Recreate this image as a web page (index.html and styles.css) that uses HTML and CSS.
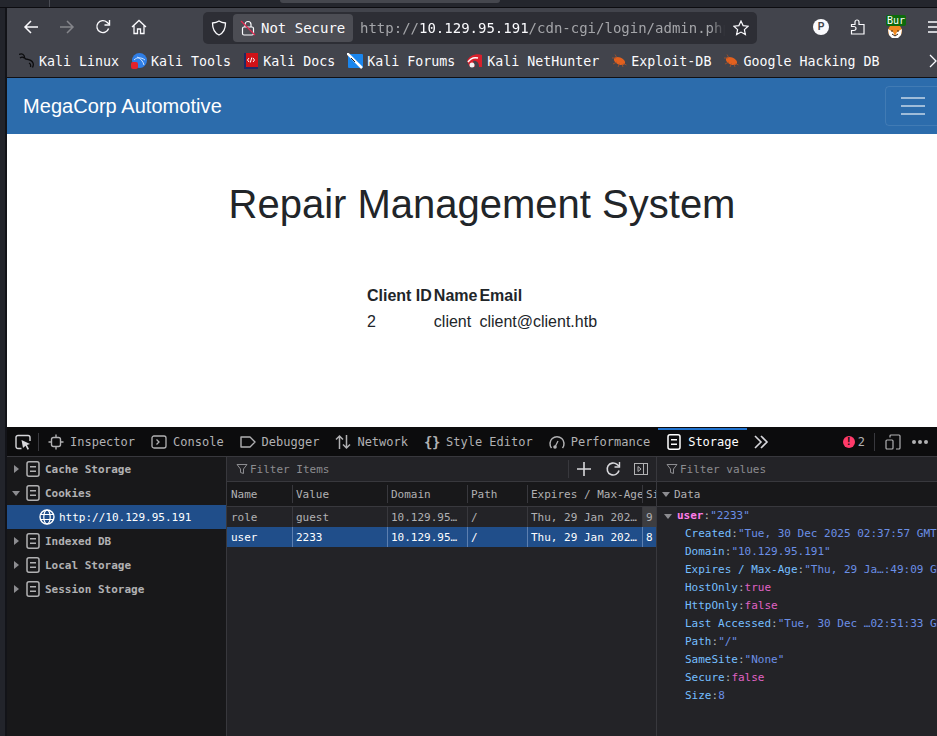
FILE: index.html
```html
<!DOCTYPE html>
<html lang="en">
<head>
    <meta charset="UTF-8">
    <meta name="viewport" content="width=device-width, initial-scale=1.0">
    <title>Repair Management System</title>
    <link rel="stylesheet" href="styles.css">
</head>
<body>

    <svg class="defs" width="0" height="0">
        <symbol id="db" viewBox="0 0 16 16">
            <rect x="2" y=".8" width="12" height="14.400" rx="2" fill="none" stroke="currentColor" stroke-width="1.500"/>
            <path d="M5 5.800h6M5 10.200h6" stroke="currentColor" stroke-width="1.400"/>
        </symbol>
        <symbol id="funnel" viewBox="0 0 12 12">
            <path d="M1 1.500h10L7.500 6v4.500l-3-1V6z" fill="none" stroke="currentColor" stroke-width="1"/>
        </symbol>
        <symbol id="roach" viewBox="0 0 16 16">
            <ellipse cx="8.500" cy="8" rx="6" ry="3.500" transform="rotate(25 8.500 8)" fill="#e2601e"/>
            <path d="M1 5h4M4 1.500 6 5M2 11l4-2M7 14l1.500-3.500M12 14l-1-3M15.500 12l-3-1.500" stroke="#a8532c" stroke-width=".8"/>
        </symbol>
    </svg>

    <div class="top-strip"><span class="strip-line"></span><span class="strip-tab"></span></div>

    <div class="desktop">
        <div class="side-strip"></div>

        <div class="window">
            <!-- Browser toolbar -->
            <div class="nav-bar">
                <button class="tool-btn">
                    <svg width="16" height="16" viewBox="0 0 16 16"><path d="M15 8H2M8 2 2 8l6 6" fill="none" stroke="#fbfbfe" stroke-width="1.500"/></svg>
                </button>
                <button class="tool-btn">
                    <svg width="16" height="16" viewBox="0 0 16 16"><path d="M1 8h13M8 2l6 6-6 6" fill="none" stroke="#85868b" stroke-width="1.500"/></svg>
                </button>
                <button class="tool-btn">
                    <svg width="16" height="16" viewBox="0 0 16 16"><path d="M13.600 9.500A6 6 0 1 1 12 3.200L14 5" fill="none" stroke="#fbfbfe" stroke-width="1.400"/><path d="M14.500 1v5h-5" fill="none" stroke="#fbfbfe" stroke-width="1.400"/></svg>
                </button>
                <button class="tool-btn">
                    <svg width="16" height="16" viewBox="0 0 16 16"><path d="M1 8l7-6.500L15 8M3 6.500v8h3.500V10h3v4.500h3.500v-8" fill="none" stroke="#fbfbfe" stroke-width="1.300"/></svg>
                </button>

                <div class="url-bar">
                    <svg class="shield" width="16" height="16" viewBox="0 0 16 16"><path d="M8 1c2 1.300 4 1.800 6.500 2 0 6-2 10-6.500 12C3.500 13 1.500 9 1.500 3 4 2.800 6 2.300 8 1z" fill="none" stroke="#fbfbfe" stroke-width="1.300"/></svg>
                    <div class="not-secure">
                        <svg width="16" height="16" viewBox="0 0 16 16"><rect x="2.500" y="7" width="11" height="8" rx="1.500" fill="none" stroke="#fbfbfe" stroke-width="1.200"/><path d="M5 7V4.500a3 3 0 0 1 6 0V7" fill="none" stroke="#fbfbfe" stroke-width="1.200"/><path d="M1 1l14 14" stroke="#e22850" stroke-width="1.300"/></svg>
                        <span>Not Secure</span>
                    </div>
                    <div class="url-text">http://<b>10.129.95.191</b>/cdn-cgi/login/admin.php</div>
                    <svg class="star" width="16" height="16" viewBox="0 0 16 16"><path d="M8 1l2.100 4.600 5 .6-3.700 3.400 1 5L8 12.100 3.600 14.600l1-5L.9 6.200l5-.6z" fill="none" stroke="#fbfbfe" stroke-width="1.200"/></svg>
                </div>

                <button class="tool-btn pocket-btn"><span class="pocket">P</span></button>
                <button class="tool-btn">
                    <svg width="16" height="16" viewBox="0 0 16 16"><path d="M2.500 5.500H6V3a2 2 0 0 1 4 0v2.500h5V15H2.500v-3.500H5a2 2 0 0 0 0-4H2.500z" fill="none" stroke="#fbfbfe" stroke-width="1.200"/></svg>
                </button>
                <button class="tool-btn burp-btn">
                    <svg width="16" height="16" viewBox="0 0 16 16"><circle cx="8" cy="8" r="7" fill="#ef8a22"/><path d="M1 6l5 3 2 4 2-4 5-3-1 6-3 3H5l-3-3z" fill="#fff"/><path d="M5 11l3 2 3-2M4 8h2M10 8h2" stroke="#3a2410" fill="none"/></svg>
                    <span class="burp-badge">Bur</span>
                </button>
                <button class="tool-btn menu-btn">
                    <svg width="16" height="16" viewBox="0 0 16 16"><path d="M1 3h14M1 8h14M1 13h14" stroke="#fbfbfe" stroke-width="1.400"/></svg>
                </button>
            </div>

            <!-- Bookmarks -->
            <div class="bookmarks">
                <div class="bookmark">
                    <svg width="16" height="16" viewBox="0 0 16 16"><path d="M0 1.500c2-1 4-.5 5 1 .8 1.500 0 3 2 3.500 3 .5 6 1.500 7 4 .6 1.500.3 3-.5 4.500M1 5c1.500-1 3-1 4 0M10 10c1 .5 2 2 1.500 4" fill="none" stroke="#0b0b0d" stroke-width="1.300"/></svg>
                    <span>Kali Linux</span>
                </div>
                <div class="bookmark">
                    <svg width="16" height="16" viewBox="0 0 16 16"><circle cx="8.500" cy="7.500" r="7.500" fill="#2f7ee6"/><path d="M3 7c3-3 7-3 11 0M6 4c3 1 6 4 7 8" stroke="#cfe4ff" fill="none"/><rect x="0" y="9" width="7" height="7" rx="2" fill="#e5232b"/></svg>
                    <span>Kali Tools</span>
                </div>
                <div class="bookmark">
                    <svg width="16" height="16" viewBox="0 0 16 16"><rect x="1" y="0" width="14" height="16" fill="#1e2a66"/><rect x="3" y="0" width="12" height="14" fill="#d01218"/><path d="M6 5 4.500 7 6 9M10 5l1.500 2L10 9M8.800 4.500l-1.500 5" stroke="#fff" fill="none"/></svg>
                    <span>Kali Docs</span>
                </div>
                <div class="bookmark">
                    <svg width="16" height="16" viewBox="0 0 16 16"><rect x="1" y="1" width="15" height="14" rx="1" fill="#1a86ee"/><path d="M0 0l15 15" stroke="#fff" stroke-width="2.500"/><path d="M4 5l4 4" stroke="#222" stroke-width="1"/></svg>
                    <span>Kali Forums</span>
                </div>
                <div class="bookmark">
                    <svg width="16" height="16" viewBox="0 0 16 16"><path d="M0 8C2 3 9 0 15 2v12h-3C12 9 9 7 6 8l2 6H3z" fill="#d8202c"/><path d="M1 9c2-3 6-5 10-4" stroke="#fff" stroke-width="1.500" fill="none"/><circle cx="5" cy="12" r="2.500" fill="#f2f2f2"/></svg>
                    <span>Kali NetHunter</span>
                </div>
                <div class="bookmark">
                    <svg width="16" height="16"><use href="#roach"/></svg>
                    <span>Exploit-DB</span>
                </div>
                <div class="bookmark">
                    <svg width="16" height="16"><use href="#roach"/></svg>
                    <span>Google Hacking DB</span>
                </div>
                <svg class="more-marks" width="12" height="14" viewBox="0 0 12 14"><path d="M1 1l6 6-6 6" fill="none" stroke="#fbfbfe" stroke-width="1.300"/></svg>
            </div>

            <!-- The page itself -->
            <div class="page">
                <nav class="navbar">
                    <a class="brand">MegaCorp Automotive</a>
                    <button class="toggler"><span></span><span></span><span></span></button>
                </nav>
                <h1>Repair Management System</h1>
                <table class="clients">
                    <tr><th>Client ID</th><th>Name</th><th>Email</th></tr>
                    <tr><td>2</td><td>client</td><td>client@client.htb</td></tr>
                </table>
            </div>

            <!-- Devtools -->
            <div class="devtools">
                <div class="dev-tabs">
                    <div class="pick">
                        <svg width="16" height="16" viewBox="0 0 16 16"><path d="M6.500 14.500H3a2 2 0 0 1-2-2v-9a2 2 0 0 1 2-2h10a2 2 0 0 1 2 2v3.500" fill="none" stroke="#d7d7db" stroke-width="1.400"/><path d="M6.500 6l8.500 4-3 1 2 4-1.500.7-2-4-2.500 2.300z" fill="#d7d7db"/></svg>
                    </div>
                    <div class="dev-tab">
                        <svg width="16" height="16" viewBox="0 0 16 16"><rect x="3.500" y="3.500" width="9" height="9" rx="2" fill="none" stroke="#b1b1b3" stroke-width="1.400"/><path d="M8 .5v3M8 12.500v3M.5 8h3M12.500 8h3" stroke="#b1b1b3" stroke-width="1.400"/></svg>
                        Inspector
                    </div>
                    <div class="dev-tab">
                        <svg width="16" height="16" viewBox="0 0 16 16"><rect x="1" y="2" width="14" height="12" rx="2" fill="none" stroke="#b1b1b3" stroke-width="1.300"/><path d="M5.500 5.500 8 8l-2.500 2.500" fill="none" stroke="#b1b1b3" stroke-width="1.300"/></svg>
                        Console
                    </div>
                    <div class="dev-tab">
                        <svg width="16" height="16" viewBox="0 0 16 16"><path d="M1 3h9l5 5-5 5H1z" fill="none" stroke="#b1b1b3" stroke-width="1.400" stroke-linejoin="round"/></svg>
                        Debugger
                    </div>
                    <div class="dev-tab">
                        <svg width="16" height="16" viewBox="0 0 16 16"><path d="M4.500 15V2M1 5.500 4.500 2 8 5.500M11.500 1v13M8 10.500l3.500 3.500 3.500-3.500" fill="none" stroke="#b1b1b3" stroke-width="1.500"/></svg>
                        Network
                    </div>
                    <div class="dev-tab">
                        <span class="braces">{}</span>
                        Style Editor
                    </div>
                    <div class="dev-tab">
                        <svg width="16" height="16" viewBox="0 0 16 16"><path d="M2.500 14A7 7 0 1 1 13.500 14" fill="none" stroke="#b1b1b3" stroke-width="1.500"/><path d="M6 13 9 7" stroke="#b1b1b3" stroke-width="1.300"/><circle cx="6" cy="13" r="1.800" fill="#b1b1b3"/></svg>
                        Performance
                    </div>
                    <div class="dev-tab active">
                        <svg width="16" height="16"><use href="#db"/></svg>
                        Storage
                    </div>
                    <svg class="more-tabs" width="16" height="14" viewBox="0 0 16 14"><path d="M2 1l6 6-6 6M8 1l6 6-6 6" fill="none" stroke="#d7d7db" stroke-width="1.600"/></svg>

                    <div class="dev-right">
                        <span class="err-dot">!</span>
                        <span class="err-count">2</span>
                        <span class="dev-sep"></span>
                        <svg width="16" height="16" viewBox="0 0 16 16"><path d="M5 3.500V2a1 1 0 0 1 1-1h8a1 1 0 0 1 1 1v12a1 1 0 0 1-1 1h-3" fill="none" stroke="#b1b1b3" stroke-width="1.200"/><rect x="1" y="6" width="7" height="9" rx="1" fill="none" stroke="#b1b1b3" stroke-width="1.200"/></svg>
                        <span class="dots"><i></i><i></i><i></i></span>
                    </div>
                </div>

                <div class="dev-body">
                    <div class="store-tree">
                        <div class="store-item"><span class="tri closed"></span><svg width="16" height="16"><use href="#db"/></svg>Cache Storage</div>
                        <div class="store-item"><span class="tri open"></span><svg width="16" height="16"><use href="#db"/></svg>Cookies</div>
                        <div class="store-item host">
                            <svg width="16" height="16" viewBox="0 0 16 16"><circle cx="8" cy="8" r="7" fill="none" stroke="#fff" stroke-width="1.400"/><ellipse cx="8" cy="8" rx="3.200" ry="7" fill="none" stroke="#fff" stroke-width="1.200"/><path d="M1.500 5.500h13M1.500 10.500h13" stroke="#fff" stroke-width="1.200"/></svg>
                            http://10.129.95.191
                        </div>
                        <div class="store-item"><span class="tri closed"></span><svg width="16" height="16"><use href="#db"/></svg>Indexed DB</div>
                        <div class="store-item"><span class="tri closed"></span><svg width="16" height="16"><use href="#db"/></svg>Local Storage</div>
                        <div class="store-item"><span class="tri closed"></span><svg width="16" height="16"><use href="#db"/></svg>Session Storage</div>
                    </div>

                    <div class="cookie-pane">
                        <div class="filter-row">
                            <svg width="12" height="12"><use href="#funnel"/></svg>
                            <span>Filter Items</span>
                            <div class="filter-tools">
                                <span class="dev-sep"></span>
                                <svg width="16" height="16" viewBox="0 0 16 16"><path d="M8 1v14M1 8h14" stroke="#d7d7db" stroke-width="1.600"/></svg>
                                <svg width="16" height="16" viewBox="0 0 16 16"><path d="M14 9.500A6 6 0 1 1 12 3.400L14 5" fill="none" stroke="#d7d7db" stroke-width="1.600"/><path d="M14.500 1v5h-5" fill="none" stroke="#d7d7db" stroke-width="1.400"/></svg>
                                <svg width="14" height="12" viewBox="0 0 14 12"><rect x=".5" y=".5" width="13" height="11" fill="none" stroke="#b1b1b3"/><path d="M9.500 .5v11" stroke="#b1b1b3"/><path d="M4 3.500 7 6 4 8.500z" fill="none" stroke="#b1b1b3"/></svg>
                            </div>
                        </div>
                        <div class="cookie-head">
                            <div>Name</div><div>Value</div><div>Domain</div><div>Path</div><div>Expires / Max-Age</div><div>Size</div>
                        </div>
                        <div class="cookie-row">
                            <div>role</div><div>guest</div><div>10.129.95…</div><div>/</div><div>Thu, 29 Jan 202…</div><div class="hover-cell">9</div>
                        </div>
                        <div class="cookie-row selected">
                            <div>user</div><div>2233</div><div>10.129.95…</div><div>/</div><div>Thu, 29 Jan 202…</div><div>8</div>
                        </div>
                    </div>

                    <div class="data-pane">
                        <div class="filter-row">
                            <svg width="12" height="12"><use href="#funnel"/></svg>
                            <span>Filter values</span>
                        </div>
                        <div class="data-head"><span class="tri open"></span>Data</div>
                        <div class="data-tree">
                            <div class="data-top"><span class="tri open"></span><b class="bool">user</b><i>:</i><span class="str">"2233"</span></div>
                            <div class="data-row"><em>Created</em><i>:</i><span class="str">"Tue, 30 Dec 2025 02:37:57 GMT"</span></div>
                            <div class="data-row"><em>Domain</em><i>:</i><span class="str">"10.129.95.191"</span></div>
                            <div class="data-row"><em>Expires / Max-Age</em><i>:</i><span class="str">"Thu, 29 Ja…:49:09 GMT"</span></div>
                            <div class="data-row"><em>HostOnly</em><i>:</i><span class="bool">true</span></div>
                            <div class="data-row"><em>HttpOnly</em><i>:</i><span class="bool">false</span></div>
                            <div class="data-row"><em>Last Accessed</em><i>:</i><span class="str">"Tue, 30 Dec …02:51:33 GMT"</span></div>
                            <div class="data-row"><em>Path</em><i>:</i><span class="str">"/"</span></div>
                            <div class="data-row"><em>SameSite</em><i>:</i><span class="str">"None"</span></div>
                            <div class="data-row"><em>Secure</em><i>:</i><span class="bool">false</span></div>
                            <div class="data-row"><em>Size</em><i>:</i><span class="str">8</span></div>
                        </div>
                    </div>
                </div>
            </div>
        </div>
    </div>

</body>
</html>
```

FILE: styles.css
```css
* {
    box-sizing: border-box;
}
html, body {
    margin: 0;
    height: 736px;
    overflow: hidden;
}
body {
    width: 937px;
    background-color: #1b1d23;
    font-family: "DejaVu Sans Mono", monospace;
    display: flex;
    flex-direction: column;
}
button {
    background: none;
    border: none;
    padding: 0;
    font: inherit;
    color: inherit;
}
.defs {
    display: block;
    height: 0;
}

/* Strip of the desktop behind the window */
.top-strip {
    height: 8px;
    background-color: #24262d;
    border-bottom: 1px solid #0c0c10;
    display: flex;
    flex-shrink: 0;
}
.strip-line {
    width: 1px;
    height: 7px;
    margin-left: 49px;
    background-color: #4a4c54;
}
.strip-tab {
    width: 220px;
    height: 3px;
    margin-left: 230px;
    background-color: #45474e;
    border-radius: 0 0 4px 4px;
}
.desktop {
    flex: 1;
    display: flex;
    min-height: 0;
}
.side-strip {
    width: 7px;
    flex-shrink: 0;
    background-color: #22242b;
    border-right: 2px solid #121318;
}
.window {
    width: 930px;
    overflow: hidden;
    display: flex;
    flex-direction: column;
}

/* Browser toolbar */
.nav-bar {
    height: 37px;
    padding-left: 6px;
    background-color: #42444c;
    display: flex;
    align-items: center;
    flex-shrink: 0;
}
.tool-btn {
    width: 36px;
    height: 32px;
    flex-shrink: 0;
    display: flex;
    align-items: center;
    justify-content: center;
    position: relative;
}
.url-bar {
    width: 554px;
    height: 32px;
    margin-left: 46px;
    margin-top: 3px;
    padding: 0 8px;
    flex-shrink: 0;
    background-color: #2d2e35;
    border-radius: 5px;
    display: flex;
    align-items: center;
    color: #a4a5a9;
    font-size: 14px;
}
.shield {
    flex-shrink: 0;
}
.not-secure {
    width: 120px;
    height: 28px;
    margin-left: 6px;
    padding-left: 7px;
    flex-shrink: 0;
    background-color: #4c4d54;
    border-radius: 4px;
    color: #fbfbfe;
    display: flex;
    align-items: center;
    gap: 5px;
}
.url-text {
    flex: 1;
    margin-left: 7px;
    white-space: nowrap;
    overflow: hidden;
    -webkit-mask-image: linear-gradient(to left, transparent 0, #000 14px);
    mask-image: linear-gradient(to left, transparent 0, #000 14px);
}
.url-text b {
    font-weight: normal;
    color: #fbfbfe;
}
.star {
    margin-left: 8px;
    flex-shrink: 0;
}
.pocket-btn {
    margin-left: 46px;
}
.pocket {
    width: 16px;
    height: 16px;
    background-color: #fbfbfe;
    border-radius: 50%;
    color: #42444c;
    font: bold 10px/16px "Liberation Sans", sans-serif;
    text-align: center;
}
.burp-btn {
    margin-left: 3px;
}
.burp-btn svg {
    margin-top: 9px;
    margin-left: -2px;
}
.burp-badge {
    position: absolute;
    top: 4px;
    left: 8px;
    width: 20px;
    height: 11px;
    background-color: #0d6a0d;
    border-radius: 2px;
    color: #fff;
    font-size: 10px;
    line-height: 11px;
    text-align: center;
}
.menu-btn {
    margin-left: 3px;
}

/* Bookmarks */
.bookmarks {
    height: 33px;
    padding-left: 12px;
    background-color: #42444c;
    border-bottom: 1px solid #101014;
    color: #fbfbfe;
    font-size: 13.31px;
    display: flex;
    align-items: center;
    gap: 12px;
    flex-shrink: 0;
}
.bookmark {
    display: flex;
    align-items: center;
    gap: 4px;
    white-space: nowrap;
}
.more-marks {
    margin-left: 38px;
    flex-shrink: 0;
}

/* The page */
.page {
    width: 950px;
    height: 349px;
    flex-shrink: 0;
    background-color: #fff;
    color: #212529;
    font-family: "Liberation Sans", Arial, sans-serif;
    font-size: 16px;
    line-height: 1.5;
}
.navbar {
    height: 56px;
    padding: 0 16px;
    background-color: #2c6cac;
    display: flex;
    align-items: center;
    justify-content: space-between;
}
.brand {
    color: #fff;
    font-size: 20px;
    letter-spacing: 0.05px;
}
.toggler {
    width: 56px;
    height: 40px;
    border: 1px solid rgba(255, 255, 255, 0.1);
    border-radius: 4px;
    padding: 0 15px;
    display: flex;
    flex-direction: column;
    justify-content: center;
    gap: 6px;
}
.toggler span {
    height: 2px;
    background-color: rgba(255, 255, 255, 0.55);
}
h1 {
    margin: 46px 0 55px;
    font-size: 40px;
    font-weight: 500;
    line-height: 48px;
    text-align: center;
}
.clients {
    margin: 0 auto;
    border-collapse: collapse;
    text-align: left;
}
.clients th, .clients td {
    padding: 1px;
}

/* Devtools */
.devtools {
    flex: 1;
    min-height: 0;
    background-color: #232327;
    display: flex;
    flex-direction: column;
    font-size: 11px;
}
.dev-tabs {
    height: 30px;
    background-color: #0c0c0d;
    border-top: 1px solid #0c0c0d;
    border-bottom: 1px solid #38383d;
    color: #b1b1b3;
    font-size: 12px;
    display: flex;
    align-items: stretch;
    flex-shrink: 0;
}
.pick {
    width: 33px;
    padding-left: 8px;
    display: flex;
    align-items: center;
    position: relative;
}
.pick::after {
    content: "";
    position: absolute;
    right: 1px;
    top: 5px;
    bottom: 5px;
    width: 1px;
    background-color: #38383d;
}
.dev-tab {
    padding: 0 8px;
    display: flex;
    align-items: center;
    gap: 6px;
    white-space: nowrap;
}
.dev-tab.active {
    color: #fff;
    box-shadow: inset 0 2px 0 #1f72cf;
}
.braces {
    width: 16px;
    font-size: 14px;
    font-weight: bold;
    letter-spacing: -0.4px;
    color: #b1b1b3;
}
.more-tabs {
    margin-left: 6px;
    align-self: center;
}
.dev-right {
    margin-left: auto;
    padding-right: 9px;
    display: flex;
    align-items: center;
}
.err-dot {
    width: 12px;
    height: 12px;
    margin-right: 3px;
    background-color: #ff3b6b;
    border-radius: 50%;
    color: #0c0c0d;
    font: bold 10px/12px "Liberation Sans", sans-serif;
    text-align: center;
}
.dev-sep {
    width: 1px;
    height: 18px;
    background-color: #38383d;
}
.dev-right .dev-sep {
    margin: 0 10px 0 9px;
}
.dots {
    margin-left: 11px;
    display: flex;
    gap: 2px;
}
.dots i {
    width: 4px;
    height: 4px;
    background-color: #b1b1b3;
    border-radius: 50%;
}
.dev-body {
    flex: 1;
    min-height: 0;
    display: flex;
}
.tri {
    width: 0;
    height: 0;
    flex-shrink: 0;
    display: inline-block;
}
.tri.closed {
    border-left: 5px solid #8c8c90;
    border-top: 4.5px solid transparent;
    border-bottom: 4.5px solid transparent;
}
.tri.open {
    border-top: 5px solid #8c8c90;
    border-left: 4.5px solid transparent;
    border-right: 4.5px solid transparent;
}

/* Storage tree on the left */
.store-tree {
    width: 220px;
    flex-shrink: 0;
    background-color: #18181a;
    border-right: 1px solid #38383d;
    color: #b1b1b3;
    font-weight: bold;
}
.store-item {
    height: 24px;
    padding-left: 18px;
    position: relative;
    display: flex;
    align-items: center;
    gap: 4px;
}
.store-item svg {
    flex-shrink: 0;
}
.store-item .tri {
    position: absolute;
    left: 7px;
}
.store-item .tri.open {
    left: 5px;
}
.store-item.host {
    padding-left: 32px;
    background-color: #204e8a;
    color: #fff;
    font-weight: normal;
}

/* Cookie table */
.cookie-pane {
    width: 430px;
    flex-shrink: 0;
    border-right: 1px solid #38383d;
}
.filter-row {
    height: 25px;
    padding-left: 9px;
    border-bottom: 1px solid #38383d;
    color: #8c8c90;
    display: flex;
    align-items: center;
    gap: 2px;
}
.filter-tools {
    margin-left: auto;
    padding-right: 8px;
    display: flex;
    align-items: center;
    gap: 13px;
}
.filter-tools .dev-sep {
    margin-right: -6px;
}
.cookie-head, .cookie-row {
    display: grid;
    grid-template-columns: 65px 95px 80px 60px 115px 14px;
    white-space: nowrap;
}
.cookie-head > div, .cookie-row > div {
    padding-left: 4px;
    overflow: hidden;
}
.cookie-head {
    height: 25px;
    background-color: #18181a;
    border-bottom: 1px solid #38383d;
    color: #b1b1b3;
    line-height: 25px;
}
.cookie-head > div + div {
    background: linear-gradient(#38383d, #38383d) left 3px / 1px 18px no-repeat;
}
.cookie-row {
    height: 20px;
    line-height: 21px;
    color: #b1b1b3;
}
.cookie-row > div + div {
    border-left: 1px solid #38383d;
    padding-left: 3px;
}
.hover-cell {
    background-color: #3d3d40;
}
.cookie-row.selected {
    background-color: #204e8a;
    color: #fff;
}
.cookie-row.selected > div + div {
    border-left-color: #5c7fb0;
}

/* Data panel */
.data-pane {
    flex: 1;
    min-width: 0;
    white-space: nowrap;
    overflow: hidden;
}
.data-head {
    height: 25px;
    padding-left: 5px;
    background-color: #18181a;
    border-bottom: 1px solid #38383d;
    color: #b1b1b3;
    display: flex;
    align-items: center;
    gap: 4px;
}
.data-tree {
    line-height: 18px;
}
.data-tree i, .data-tree em {
    font-style: normal;
}
.data-tree i {
    color: #b1b1b3;
}
.data-tree em {
    color: #75bfff;
}
.data-top {
    padding-left: 7px;
    display: flex;
    align-items: center;
    height: 18px;
}
.data-top .tri {
    margin-right: 5px;
}
.data-row {
    padding-left: 28px;
}
.str {
    color: #6b8fe6;
}
.bool {
    color: #e062c4;
}
b.bool {
    color: #ff7de9;
}
```
